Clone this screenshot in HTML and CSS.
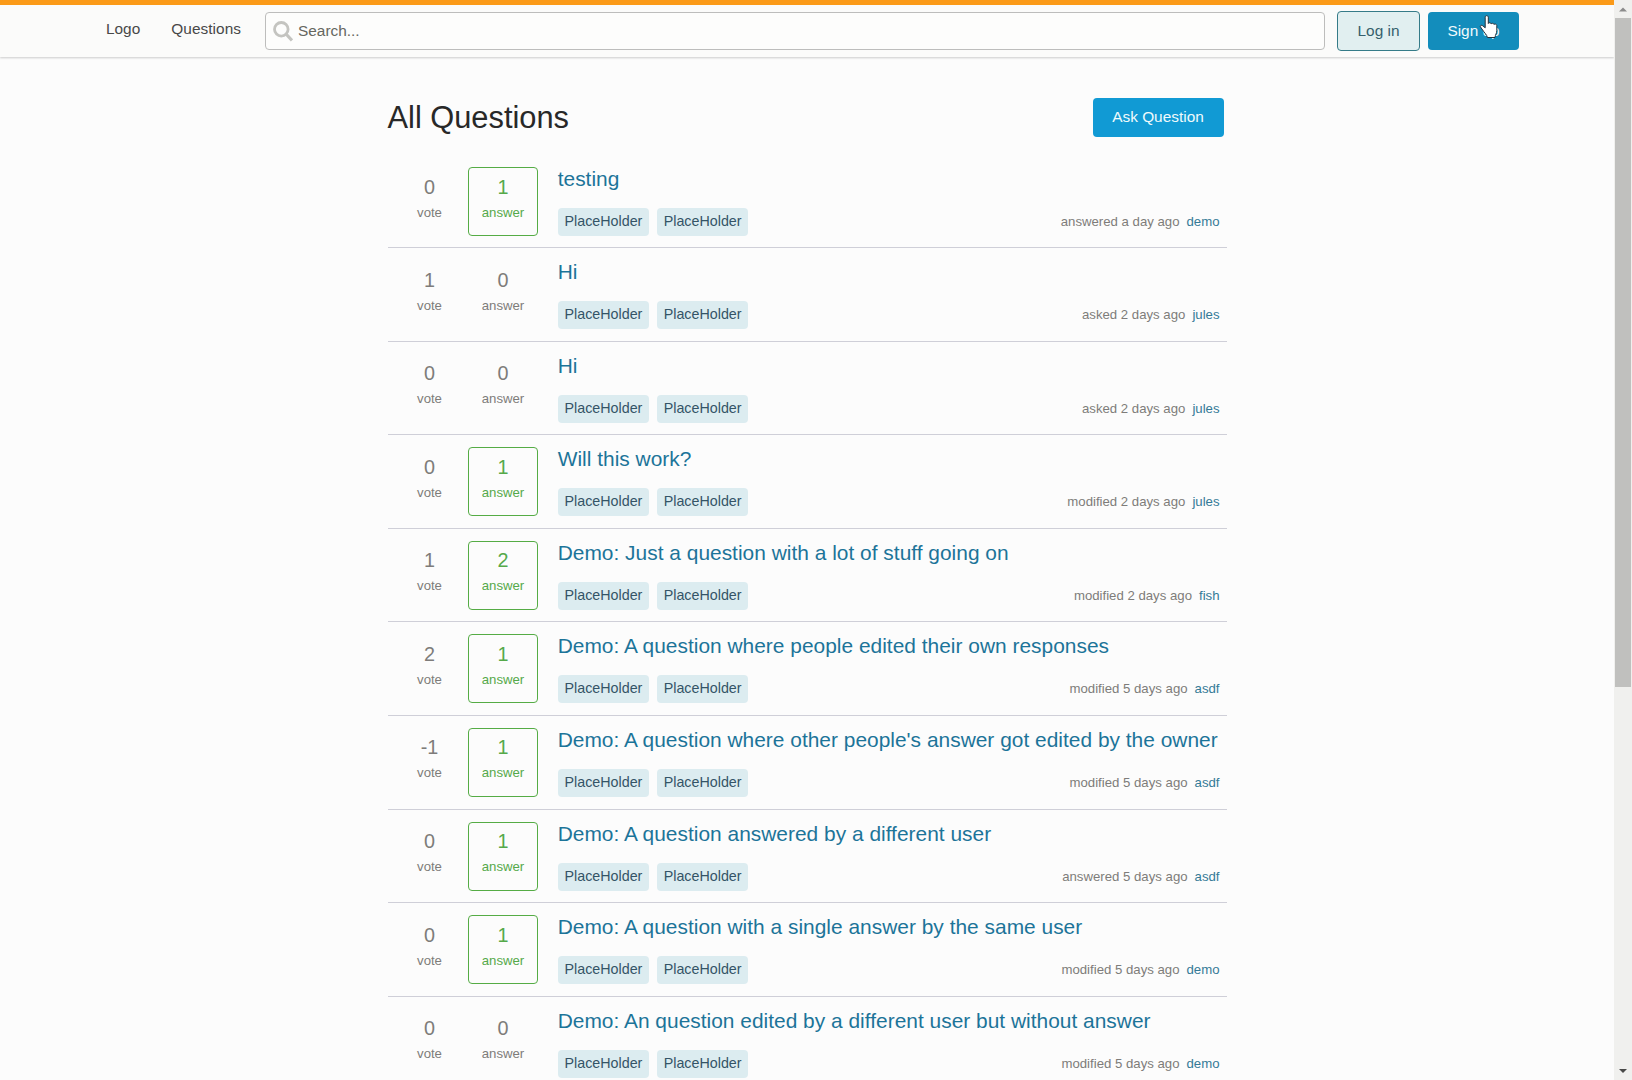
FILE: index.html
```html
<!DOCTYPE html>
<html lang="en">
<head>
<meta charset="utf-8">
<title>All Questions</title>
<link rel="stylesheet" href="styles.css">
</head>
<body>
<div class="viewport">
  <div class="page">
    <header class="topbar">
      <nav class="nav"><a class="nav-link">Logo</a><a class="nav-link">Questions</a></nav>
      <div class="search">
        <svg class="search-icon" width="20" height="21" viewBox="0 0 20 21"><circle cx="8.300" cy="8.300" r="6.800" fill="none" stroke="#c4c4c0" stroke-width="2.800"/><path d="M13 13l6 6.500" stroke="#c4c4c0" stroke-width="3.200"/></svg>
        <span>Search...</span>
      </div>
      <a class="btn btn-login">Log in</a>
      <a class="btn btn-signup">Sign up
        <svg class="pointer" width="21" height="25" viewBox="0 0 21 25"><path d="M6.200 2.200c0-2 3-2 3.100 0v6.300c.4-1.200 2.700-1 2.900.4.5-1 2.600-.8 2.800.6.6-.8 2.700-.5 2.800 1v5.200c0 3-1.500 3.600-1.800 6.800H8.400c-.4-2.800-3.300-4.900-4.800-7.600-.8-1.400-2-2.300-2.300-3.300-.3-1.200 1.300-1.800 2.500-.8l2.400 2z" fill="#fff" stroke="#25303a" stroke-width="1" stroke-linejoin="round"/></svg>
      </a>
    </header>
    <main class="main">
      <div class="heading"><h1>All Questions</h1><a class="btn btn-ask">Ask Question</a></div>
      <section class="list">
        <article class="row"><div class="stat"><b>0</b><span>vote</span></div><div class="stat answered"><b>1</b><span>answer</span></div><div class="summary"><h3>testing</h3><div class="foot"><i class="tag">PlaceHolder</i><i class="tag">PlaceHolder</i><p>answered a day ago<a>demo</a></p></div></div></article>
        <article class="row"><div class="stat"><b>1</b><span>vote</span></div><div class="stat"><b>0</b><span>answer</span></div><div class="summary"><h3>Hi</h3><div class="foot"><i class="tag">PlaceHolder</i><i class="tag">PlaceHolder</i><p>asked 2 days ago<a>jules</a></p></div></div></article>
        <article class="row"><div class="stat"><b>0</b><span>vote</span></div><div class="stat"><b>0</b><span>answer</span></div><div class="summary"><h3>Hi</h3><div class="foot"><i class="tag">PlaceHolder</i><i class="tag">PlaceHolder</i><p>asked 2 days ago<a>jules</a></p></div></div></article>
        <article class="row"><div class="stat"><b>0</b><span>vote</span></div><div class="stat answered"><b>1</b><span>answer</span></div><div class="summary"><h3>Will this work?</h3><div class="foot"><i class="tag">PlaceHolder</i><i class="tag">PlaceHolder</i><p>modified 2 days ago<a>jules</a></p></div></div></article>
        <article class="row"><div class="stat"><b>1</b><span>vote</span></div><div class="stat answered"><b>2</b><span>answer</span></div><div class="summary"><h3>Demo: Just a question with a lot of stuff going on</h3><div class="foot"><i class="tag">PlaceHolder</i><i class="tag">PlaceHolder</i><p>modified 2 days ago<a>fish</a></p></div></div></article>
        <article class="row"><div class="stat"><b>2</b><span>vote</span></div><div class="stat answered"><b>1</b><span>answer</span></div><div class="summary"><h3>Demo: A question where people edited their own responses</h3><div class="foot"><i class="tag">PlaceHolder</i><i class="tag">PlaceHolder</i><p>modified 5 days ago<a>asdf</a></p></div></div></article>
        <article class="row"><div class="stat"><b>-1</b><span>vote</span></div><div class="stat answered"><b>1</b><span>answer</span></div><div class="summary"><h3>Demo: A question where other people's answer got edited by the owner</h3><div class="foot"><i class="tag">PlaceHolder</i><i class="tag">PlaceHolder</i><p>modified 5 days ago<a>asdf</a></p></div></div></article>
        <article class="row"><div class="stat"><b>0</b><span>vote</span></div><div class="stat answered"><b>1</b><span>answer</span></div><div class="summary"><h3>Demo: A question answered by a different user</h3><div class="foot"><i class="tag">PlaceHolder</i><i class="tag">PlaceHolder</i><p>answered 5 days ago<a>asdf</a></p></div></div></article>
        <article class="row"><div class="stat"><b>0</b><span>vote</span></div><div class="stat answered"><b>1</b><span>answer</span></div><div class="summary"><h3>Demo: A question with a single answer by the same user</h3><div class="foot"><i class="tag">PlaceHolder</i><i class="tag">PlaceHolder</i><p>modified 5 days ago<a>demo</a></p></div></div></article>
        <article class="row"><div class="stat"><b>0</b><span>vote</span></div><div class="stat"><b>0</b><span>answer</span></div><div class="summary"><h3>Demo: An question edited by a different user but without answer</h3><div class="foot"><i class="tag">PlaceHolder</i><i class="tag">PlaceHolder</i><p>modified 5 days ago<a>demo</a></p></div></div></article>
      </section>
    </main>
  </div>
  <div class="scrollbar">
    <svg width="18" height="18" viewBox="0 0 18 18"><path d="M5 11.500l4-4 4 4z" fill="#8b8b8b"/></svg>
    <div class="thumb"></div>
    <svg width="18" height="18" viewBox="0 0 18 18"><path d="M5 7l4 4 4-4z" fill="#484848"/></svg>
  </div>
</div>
</body>
</html>
```
FILE: styles.css
```css
* { box-sizing: border-box; }
body { margin: 0; background: #fcfcfc; font-family: "Liberation Sans", Arial, sans-serif; font-size: 15.4px; color: #3b4045; }
h1, h3, p { margin: 0; font-weight: 400; }
.viewport { display: flex; height: 1080px; overflow: hidden; }
.page { flex: 1; min-width: 0; height: 1080px; overflow: hidden; }
.topbar { display: flex; align-items: flex-start; height: 57px; padding: 6px 94px 0 106px; border-top: 5px solid #fb9a18; background: #fbfbfa; box-shadow: 0 1px 2px rgba(60, 60, 60, .25); }
.nav { display: flex; gap: 31px; width: 159px; line-height: 36px; white-space: nowrap; color: #484848; }
.nav-link:last-child { letter-spacing: .05px; }
.search { display: flex; align-items: center; gap: 5px; width: 1060px; height: 38px; margin-top: 1px; padding-left: 7px; border: 1px solid #bdbdbc; border-radius: 4px; background: #fdfdfc; color: #66675f; }
.btn { display: flex; align-items: center; justify-content: center; border-radius: 4px; white-space: nowrap; }
.btn-login { width: 83px; height: 40px; margin-left: 12px; padding-bottom: 1px; border: 1px solid #357b88; background: #e1eff0; color: #365f6c; }
.btn-signup { position: relative; width: 91px; height: 38px; margin: 1px 0 0 8px; padding-bottom: 1px; background: #138dbc; color: #f0fafc; }
.pointer { position: absolute; left: 51px; top: 3px; }
.main { width: 839px; margin-left: 388px; }
.heading { display: flex; justify-content: space-between; height: 98px; padding: 41px 3.500px 0 0; }
h1 { margin-left: -.5px; font-size: 30.8px; line-height: 39px; color: #282828; }
.btn-ask { width: 131px; height: 39px; padding-bottom: 1px; background: #119ad4; color: #f0fafc; }
.row { display: flex; height: 93.600px; padding-top: 12px; border-bottom: 1px solid #cfcfd8; }
.row:first-child { height: 93px; }
.stat { display: flex; flex-direction: column; align-items: center; width: 70px; height: 69px; padding-top: 7.500px; border: 1px solid transparent; border-radius: 4px; color: #7e7c7a; }
.stat:first-child { width: 62px; margin: 0 7.500px 0 10.500px; }
.stat b { font-size: 19.8px; font-weight: 400; line-height: 23px; }
.stat span { margin-top: 6px; font-size: 13.2px; line-height: 15px; }
.answered { border-color: #55ac45; color: #55a94a; }
.summary { flex: 1; min-width: 0; margin-left: 19.700px; }
h3 { height: 41px; font-size: 20.9px; line-height: 23px; letter-spacing: .015px; white-space: nowrap; color: #1c7499; }
.foot { display: flex; gap: 7.700px; height: 28px; padding-right: 7.500px; }
.tag { width: 91.500px; border-radius: 4px; background: #dcecf0; font-size: 14.3px; font-style: normal; line-height: 27px; text-align: center; color: #345467; }
.foot p { margin-left: auto; font-size: 13.2px; line-height: 28px; color: #7e7c7a; }
.foot p a { margin-left: 7px; color: #347a97; }
.scrollbar { display: flex; flex-direction: column; width: 18px; background: #f0f0ee; }
.scrollbar svg { flex: none; }
.thumb { height: 669px; margin: 0 1px 375px; background: #c0c0be; }
```
